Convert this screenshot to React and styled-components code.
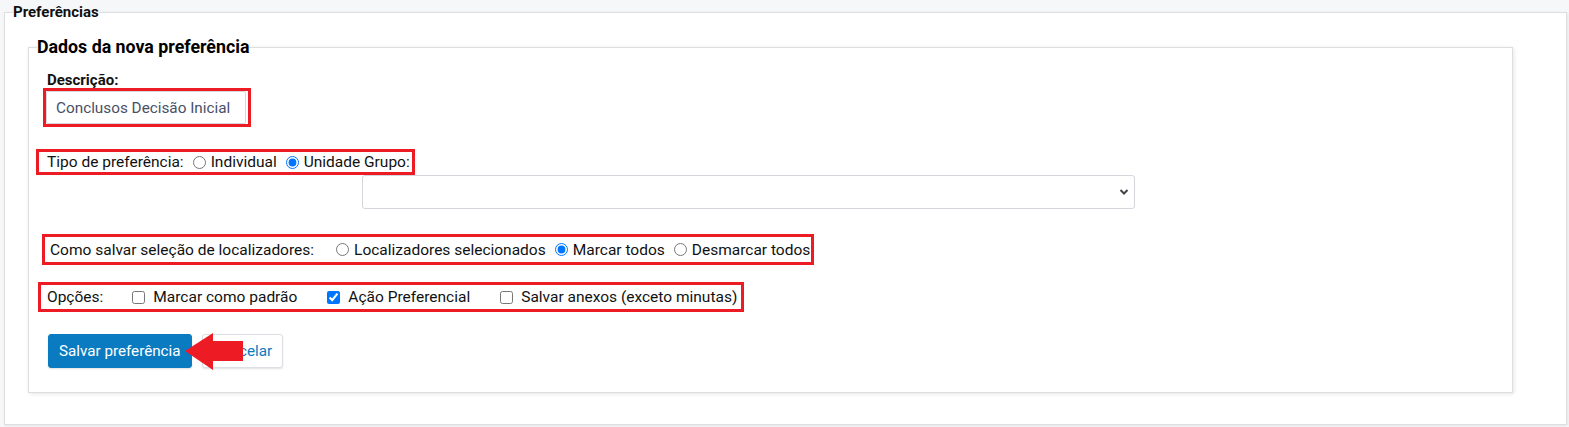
import React from "react";
import styled, { createGlobalStyle } from "styled-components";

const Global = createGlobalStyle`
  html, body { margin: 0; padding: 0; }
  body {
    background: #f6f7f9;
    font-family: Roboto, "Liberation Sans", Arial, sans-serif;
    color: #212529;
    width: 1569px;
  }
`;

const OuterSet = styled.fieldset`
  margin: 0 2px 2px 4px;
  padding: 0 8px 0 8px;
  border: 1px solid #dedede;
  background: #fff;
  box-shadow: 1px 1px 3px rgba(0, 0, 0, 0.08);
  min-width: 0;
`;

const OuterLegend = styled.legend`
  padding: 0;
  font-size: 15px;
  line-height: 24px;
  font-weight: 700;
  color: #111;
`;

const InnerSet = styled.fieldset`
  margin: 13px 45px 31px 15px;
  padding: 15px 18px 24px 18px;
  border: 1px solid #dedede;
  box-shadow: 1px 1px 4px rgba(0, 0, 0, 0.1);
  min-width: 0;
`;

const InnerLegend = styled.legend`
  padding: 0;
  margin-left: -10px;
  font-size: 17.8px;
  line-height: 20px;
  font-weight: 700;
  color: #000;
`;

const FieldLabel = styled.label`
  display: block;
  font-size: 15px;
  line-height: 16px;
  font-weight: 700;
  color: #111;
`;

const Mark = styled.div`
  display: flex;
  align-items: center;
  width: fit-content;
  border: 3px solid #ed1c24;
  margin-left: ${(p) => p.$ml || 0}px;
  margin-top: ${(p) => p.$mt || 0}px;
  padding: ${(p) => p.$pad || "0"};
  height: ${(p) => p.$h}px;
  box-sizing: border-box;
`;

const TextInput = styled.input`
  width: 200px;
  height: 33px;
  box-sizing: border-box;
  border: 1px solid #d3d7dc;
  border-radius: 2px;
  padding: 0 9px;
  font-family: inherit;
  font-size: 15.3px;
  color: #495066;
  outline: none;
`;

const Row = styled.div`
  display: flex;
  align-items: center;
  font-size: 15.5px;
  color: #111;
  white-space: nowrap;
`;

const Caption = styled.span`
  margin-right: ${(p) => p.$mr || 0}px;
`;

const Choice = styled.label`
  display: inline-flex;
  align-items: center;
  margin-right: ${(p) => p.$mr || 0}px;
  input {
    margin: 0 5px 0 0;
  }
  input[type="checkbox"] {
    margin: 0 8px 0 0;
  }
`;

const SelectWrap = styled.div`
  position: relative;
  width: 773px;
  margin-left: 315px;
`;

const Select = styled.select`
  appearance: none;
  display: block;
  width: 100%;
  height: 34px;
  border: 1px solid #d3d7dc;
  border-radius: 3px;
  background: #fff;
  font-family: inherit;
  font-size: 14px;
`;

const Chevron = styled.svg`
  position: absolute;
  right: 6px;
  top: 13px;
  pointer-events: none;
`;

const Buttons = styled.div`
  position: relative;
  display: flex;
  gap: 10px;
  margin-top: 22px;
  margin-left: 1px;
`;

const Btn = styled.button`
  height: 34px;
  padding: 0 10px;
  border-radius: 3px;
  font-family: inherit;
  font-size: 15.2px;
  cursor: pointer;
  border: 1px solid ${(p) => (p.$primary ? "#0a7bc0" : "#dcdfe3")};
  background: ${(p) => (p.$primary ? "#0a7bc0" : "#fff")};
  color: ${(p) => (p.$primary ? "#fff" : "#0a7bc0")};
  box-shadow: 0 1px 2px rgba(0, 0, 0, 0.12);
`;

const Arrow = styled.svg`
  position: absolute;
  left: 137px;
  top: -1px;
`;

export default function App() {
  return (
    <>
      <Global />
      <OuterSet>
        <OuterLegend>Preferências</OuterLegend>
        <InnerSet>
          <InnerLegend>Dados da nova preferência</InnerLegend>
          <FieldLabel htmlFor="desc">Descrição:</FieldLabel>
          <Mark $ml={-4} $h={39} $pad="0 2px 0 0">
            <TextInput id="desc" defaultValue="Conclusos Decisão Inicial" />
          </Mark>

          <Mark $ml={-11} $mt={22} $h={26} $pad="0 2px 0 8px">
            <Row>
              <Caption $mr={9}>Tipo de preferência:</Caption>
              <Choice $mr={9}>
                <input type="radio" name="tipo" /> Individual
              </Choice>
              <Choice>
                <input type="radio" name="tipo" defaultChecked /> Unidade Grupo:
              </Choice>
            </Row>
          </Mark>
          <SelectWrap>
            <Select>
              <option></option>
            </Select>
            <Chevron width="10" height="8" viewBox="0 0 10 8">
              <path d="M1.5 2 L5 5.5 L8.5 2" fill="none" stroke="#444" strokeWidth="2" />
            </Chevron>
          </SelectWrap>

          <Mark $ml={-5} $mt={25} $h={31} $pad="0 1px 0 5px">
            <Row>
              <Caption $mr={22}>Como salvar seleção de localizadores:</Caption>
              <Choice $mr={9}>
                <input type="radio" name="loc" /> Localizadores selecionados
              </Choice>
              <Choice $mr={9}>
                <input type="radio" name="loc" defaultChecked /> Marcar todos
              </Choice>
              <Choice>
                <input type="radio" name="loc" /> Desmarcar todos
              </Choice>
            </Row>
          </Mark>

          <Mark $ml={-9} $mt={17} $h={30} $pad="0 4px 0 6px">
            <Row>
              <Caption $mr={29}>Opções:</Caption>
              <Choice $mr={30}>
                <input type="checkbox" /> Marcar como padrão
              </Choice>
              <Choice $mr={30}>
                <input type="checkbox" defaultChecked /> Ação Preferencial
              </Choice>
              <Choice>
                <input type="checkbox" /> Salvar anexos (exceto minutas)
              </Choice>
            </Row>
          </Mark>

          <Buttons>
            <Btn $primary type="button">Salvar preferência</Btn>
            <Btn type="button">Cancelar</Btn>
            <Arrow width="60" height="38" viewBox="0 0 60 38">
              <polygon points="0,18 28,0 28,8 58,8 58,28 28,28 28,37" fill="#ed1c24" />
            </Arrow>
          </Buttons>
        </InnerSet>
      </OuterSet>
    </>
  );
}
